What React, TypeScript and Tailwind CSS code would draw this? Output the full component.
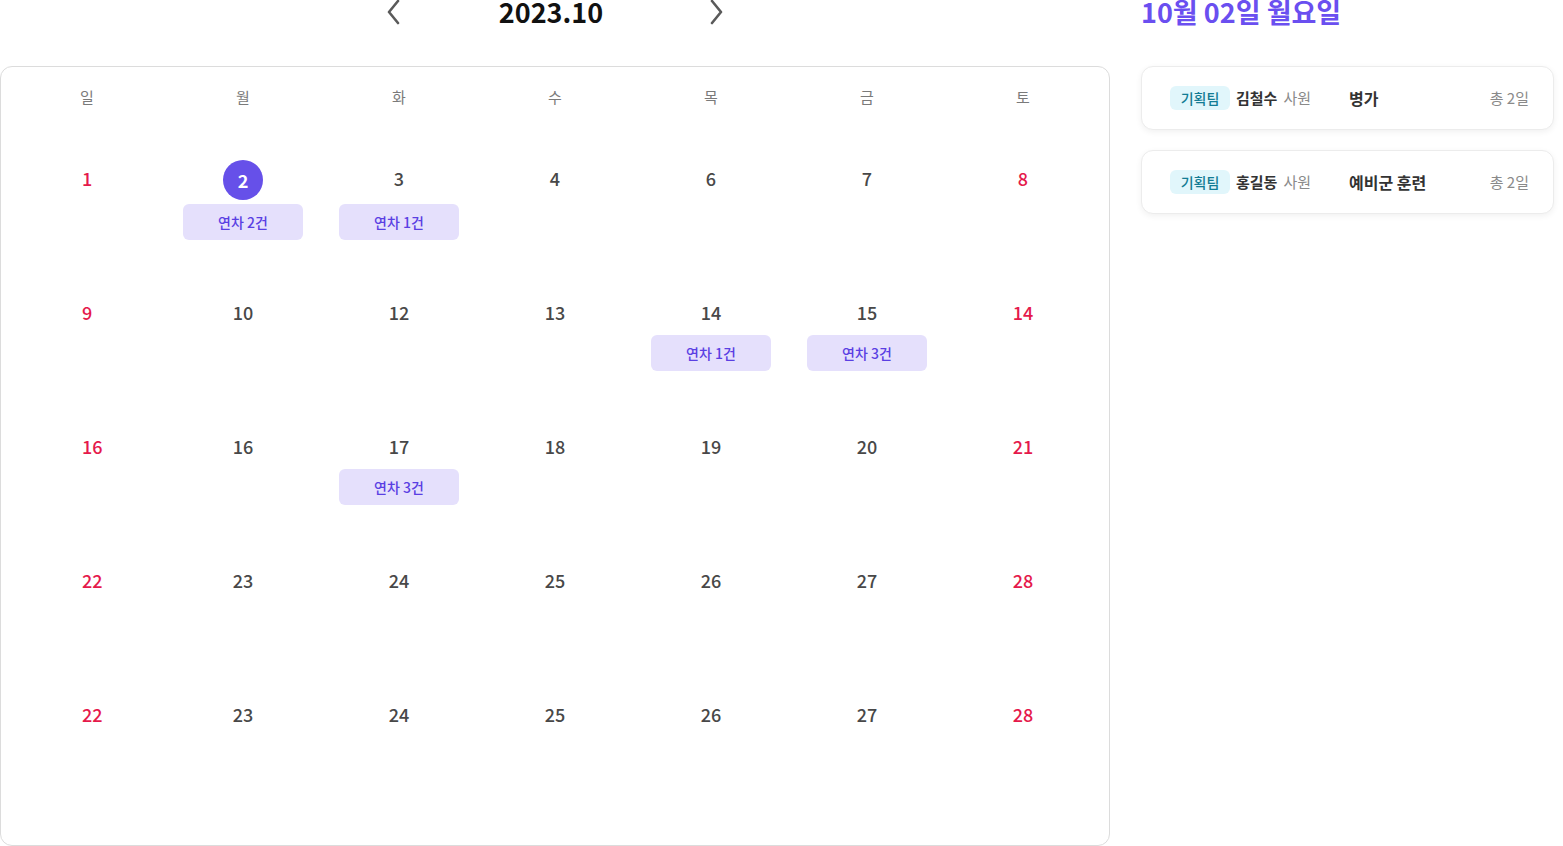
const FONT = "font-['Noto_Sans_CJK_KR','Noto_Sans',sans-serif]";

type Day = { n: number; badge?: string; selected?: boolean };

const weeks: Day[][] = [
  [{ n: 1 }, { n: 2, badge: "연차 2건", selected: true }, { n: 3, badge: "연차 1건" }, { n: 4 }, { n: 6 }, { n: 7 }, { n: 8 }],
  [{ n: 9 }, { n: 10 }, { n: 12 }, { n: 13 }, { n: 14, badge: "연차 1건" }, { n: 15, badge: "연차 3건" }, { n: 14 }],
  [{ n: 16 }, { n: 16 }, { n: 17, badge: "연차 3건" }, { n: 18 }, { n: 19 }, { n: 20 }, { n: 21 }],
  [{ n: 22 }, { n: 23 }, { n: 24 }, { n: 25 }, { n: 26 }, { n: 27 }, { n: 28 }],
  [{ n: 22 }, { n: 23 }, { n: 24 }, { n: 25 }, { n: 26 }, { n: 27 }, { n: 28 }],
];

const dayNames = ["일", "월", "화", "수", "목", "금", "토"];

const leaves = [
  { team: "기획팀", name: "김철수", rank: "사원", type: "병가", total: "총 2일" },
  { team: "기획팀", name: "홍길동", rank: "사원", type: "예비군 훈련", total: "총 2일" },
];

const Chevron = ({ dir }: { dir: "left" | "right" }) => (
  <svg width="14" height="26" viewBox="0 0 14 26" fill="none">
    <polyline
      points={dir === "left" ? "12,2 3,13 12,24" : "2,2 11,13 2,24"}
      stroke="#5a5a5a"
      strokeWidth="2.6"
      strokeLinecap="round"
      strokeLinejoin="round"
    />
  </svg>
);

const DateCell = ({ day, col, first }: { day: Day; col: number; first: boolean }) => {
  const red = col === 0 || col === 6;
  const color = red ? "text-[#e5194b]" : "text-[#484848]";
  return (
    <div className="flex flex-col items-center pt-[39px]">
      {day.selected ? (
        <div className="-mt-[7px] -mb-[11px] flex h-[40px] w-[40px] items-center justify-center rounded-full bg-[#6650e9] text-[18px] font-bold leading-[22px] text-white">
          {day.n}
        </div>
      ) : col === 0 ? (
        <div className="flex w-[10px] justify-start">
          <span className={`whitespace-nowrap text-[18px] font-medium leading-[22px] ${color}`}>{day.n}</span>
        </div>
      ) : (
        <span className={`text-[18px] font-medium leading-[22px] ${color}`}>{day.n}</span>
      )}
      {day.badge && (
        <div
          className={`${first ? "mt-[15px]" : "mt-[12px]"} flex h-[36px] w-[120px] items-center justify-center rounded-[6px] bg-[#e5e0fc] text-[14px] font-medium text-[#5a3fe3]`}
        >
          {day.badge}
        </div>
      )}
    </div>
  );
};

export default function App() {
  return (
    <div className={`${FONT} flex h-[846px] w-[1563px] gap-[31px] overflow-hidden bg-white`}>
      <div className="flex w-[1110px] flex-col">
        <div className="-mt-[4px] flex h-[32px] items-center justify-center">
          <Chevron dir="left" />
          <h1 className="ml-[96px] mr-[104px] w-[110px] text-center text-[27px] font-bold leading-[32px] text-[#111]">2023.10</h1>
          <Chevron dir="right" />
        </div>
        <div className="mt-[38px] h-[780px] rounded-[12px] border border-[#dcdcdc] px-[8px]">
          <div className="grid h-[61px] grid-cols-7 items-center">
            {dayNames.map((d) => (
              <span key={d} className="text-center text-[15px] text-[#7a7a7a]">
                {d}
              </span>
            ))}
          </div>
          {weeks.map((w, i) => (
            <div key={i} className="grid h-[134px] grid-cols-7">
              {w.map((d, j) => (
                <DateCell key={j} day={d} col={j} first={i === 0} />
              ))}
            </div>
          ))}
        </div>
      </div>
      <div className="flex w-[413px] flex-col">
        <h2 className="-mt-[4px] h-[32px] text-[27px] font-bold leading-[32px] text-[#6a4ff0]">10월 02일 월요일</h2>
        <div className="mt-[38px] flex flex-col gap-[20px]">
          {leaves.map((l, i) => (
            <div
              key={i}
              className="flex h-[64px] items-center rounded-[12px] border border-[#ececec] bg-white pl-[28px] pr-[24px] shadow-[0_2px_6px_rgba(0,0,0,0.06)]"
            >
              <div className="flex w-[179px] items-center gap-[6px]">
                <span className="flex h-[24px] w-[60px] items-center justify-center rounded-[6px] bg-[#e1f6fb] text-[14px] font-medium text-[#137c94]">
                  {l.team}
                </span>
                <span className="text-[15px] font-bold text-[#333]">{l.name}</span>
                <span className="text-[15px] text-[#8a8a8a]">{l.rank}</span>
              </div>
              <span className="flex-1 text-[16px] font-bold text-[#333]">{l.type}</span>
              <span className="text-[15px] text-[#8a8a8a]">{l.total}</span>
            </div>
          ))}
        </div>
      </div>
    </div>
  );
}
